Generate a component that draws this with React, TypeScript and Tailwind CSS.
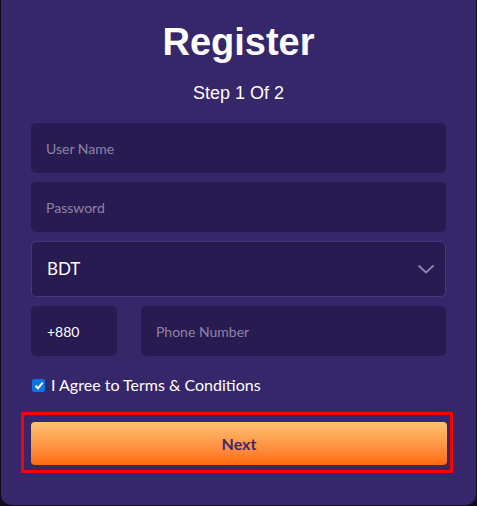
import React from "react";

export default function App() {
  return (
    <div className="w-[477px] h-[506px] bg-[#120c22] overflow-hidden">
      <div className="ml-[1px] w-[475px] h-[505px] bg-[#36266a] rounded-b-[10px] flex flex-col items-center">
        <h1
          className="mt-[19px] text-[38px] leading-[46px] font-bold text-white"
          style={{ fontFamily: '"Liberation Sans", Arial, sans-serif' }}
        >
          Register
        </h1>
        <p
          className="mt-[17px] text-[18px] leading-[22px] text-white"
          style={{ fontFamily: '"Liberation Sans", Arial, sans-serif' }}
        >
          Step 1 Of 2
        </p>
        <div
          className="w-full pl-[30px] pr-[30px] mt-[19px] flex flex-col"
          style={{ fontFamily: 'Lato, "Noto Sans", sans-serif' }}
        >
          <div className="h-[50px] rounded-[5px] bg-[#281b52] flex items-center px-[15px] text-[14px] text-[#8c84a6]">
            User Name
          </div>
          <div className="mt-[9px] h-[50px] rounded-[5px] bg-[#281b52] flex items-center px-[15px] text-[14px] text-[#8c84a6]">
            Password
          </div>
          <div className="mt-[9px] h-[56px] rounded-[5px] bg-[#281b52] border border-[#46377f] flex items-center justify-between pl-[15px] pr-[10px] text-[17px] text-white">
            <span>BDT</span>
            <svg width="18" height="10" viewBox="0 0 18 10" fill="none">
              <path d="M1.5 1.5 L9 8.5 L16.5 1.5" stroke="#8e86aa" strokeWidth="1.8" />
            </svg>
          </div>
          <div className="mt-[9px] flex gap-[24px]">
            <div className="w-[86px] h-[50px] rounded-[5px] bg-[#281b52] flex items-center px-[16px] text-[14px] text-white">
              +880
            </div>
            <div className="flex-1 h-[50px] rounded-[5px] bg-[#281b52] flex items-center px-[15px] text-[14px] text-[#8c84a6]">
              Phone Number
            </div>
          </div>
          <label className="mt-[20px] flex items-center gap-[6px] text-[16px] text-white leading-[18px]">
            <span className="w-[13px] h-[13px] rounded-[2px] bg-[#0b74e5] flex items-center justify-center ml-[1px]">
              <svg width="10" height="9" viewBox="0 0 10 9" fill="none">
                <path d="M1.5 4.8 L4 7.2 L8.7 1.6" stroke="white" strokeWidth="2" />
              </svg>
            </span>
            I Agree to Terms &amp; Conditions
          </label>
        </div>
        <div className="mt-[18px] self-start ml-[20px] w-[432px] h-[61px] border-[3px] border-[#ff0000] pt-[7px] pl-[7px]">
          <button className="w-[416px] h-[43px] rounded-[4px] bg-gradient-to-b from-[#ffc171] to-[#ff6a00] text-[#3d2a6e] text-[16px] font-bold"
            style={{ fontFamily: 'Lato, "Noto Sans", sans-serif' }}>
            Next
          </button>
        </div>
      </div>
    </div>
  );
}
